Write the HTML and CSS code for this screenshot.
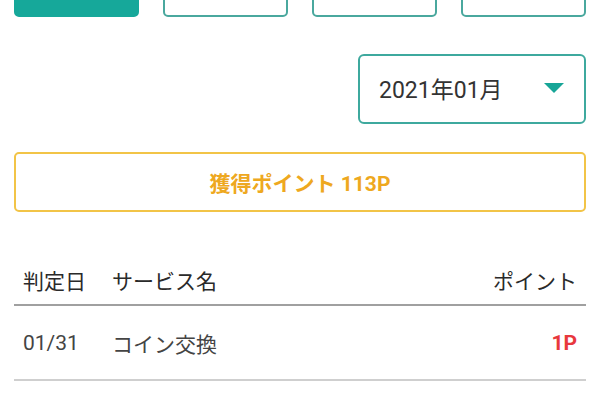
FILE: index.html
```html
<!DOCTYPE html>
<html lang="ja">
<head>
<meta charset="utf-8">
<link rel="stylesheet" href="styles.css">
</head>
<body>
<div class="page">
  <div class="tabs">
    <div class="tab tab-active"></div>
    <div class="tab"></div>
    <div class="tab"></div>
    <div class="tab"></div>
  </div>
  <div class="select-row">
    <div class="select">
      <span class="select-text">2021年01月</span>
      <span class="caret"></span>
    </div>
  </div>
  <div class="total">獲得ポイント 113P</div>
  <div class="table">
    <div class="row head">
      <div class="c-date">判定日</div>
      <div class="c-name">サービス名</div>
      <div class="c-point">ポイント</div>
    </div>
    <div class="row body">
      <div class="c-date">01/31</div>
      <div class="c-name">コイン交換</div>
      <div class="c-point red">1P</div>
    </div>
  </div>
</div>
</body>
</html>
```

FILE: styles.css
```css
html, body {
  margin: 0;
  padding: 0;
  background: #fff;
  font-family: Roboto, "Noto Sans CJK JP", sans-serif;
  overflow: hidden;
}
.page {
  padding: 0 14px;
}
.tabs {
  display: flex;
  gap: 24px;
  margin-top: -23px;
}
.tab {
  flex: 1;
  height: 40px;
  box-sizing: border-box;
  border: 2px solid #4aa89e;
  border-radius: 5px;
  background: #fff;
}
.tab-active {
  background: #16a89a;
  border-color: #16a89a;
}
.select-row {
  display: flex;
  justify-content: flex-end;
  margin-top: 37px;
}
.select {
  width: 228px;
  height: 70px;
  box-sizing: border-box;
  border: 2px solid #3ea99e;
  border-radius: 6px;
  display: flex;
  align-items: center;
  justify-content: space-between;
  padding: 0 20px 2px 19px;
}
.select-text {
  font-size: 23px;
  color: #333;
}
.caret {
  width: 0;
  height: 0;
  border-left: 10px solid transparent;
  border-right: 10px solid transparent;
  border-top: 10px solid #17a597;
}
.total {
  margin-top: 28px;
  height: 60px;
  box-sizing: border-box;
  border: 2px solid #f2c447;
  border-radius: 5px;
  display: flex;
  align-items: center;
  justify-content: center;
  font-size: 21px;
  font-weight: 700;
  color: #eea820;
}
.table {
  margin-top: 44px;
}
.row {
  display: flex;
  align-items: center;
  padding: 0 9px;
  font-size: 21px;
}
.head {
  height: 48px;
  color: #2a2a2a;
  border-bottom: 2px solid #a0a0a0;
}
.body {
  height: 73px;
  color: #444;
  border-bottom: 2px solid #cfcfcf;
}
.c-date {
  width: 89px;
}
.c-name {
  flex: 1;
}
.c-point {
  text-align: right;
}
.red {
  color: #e8383d;
  font-weight: 700;
}
```
